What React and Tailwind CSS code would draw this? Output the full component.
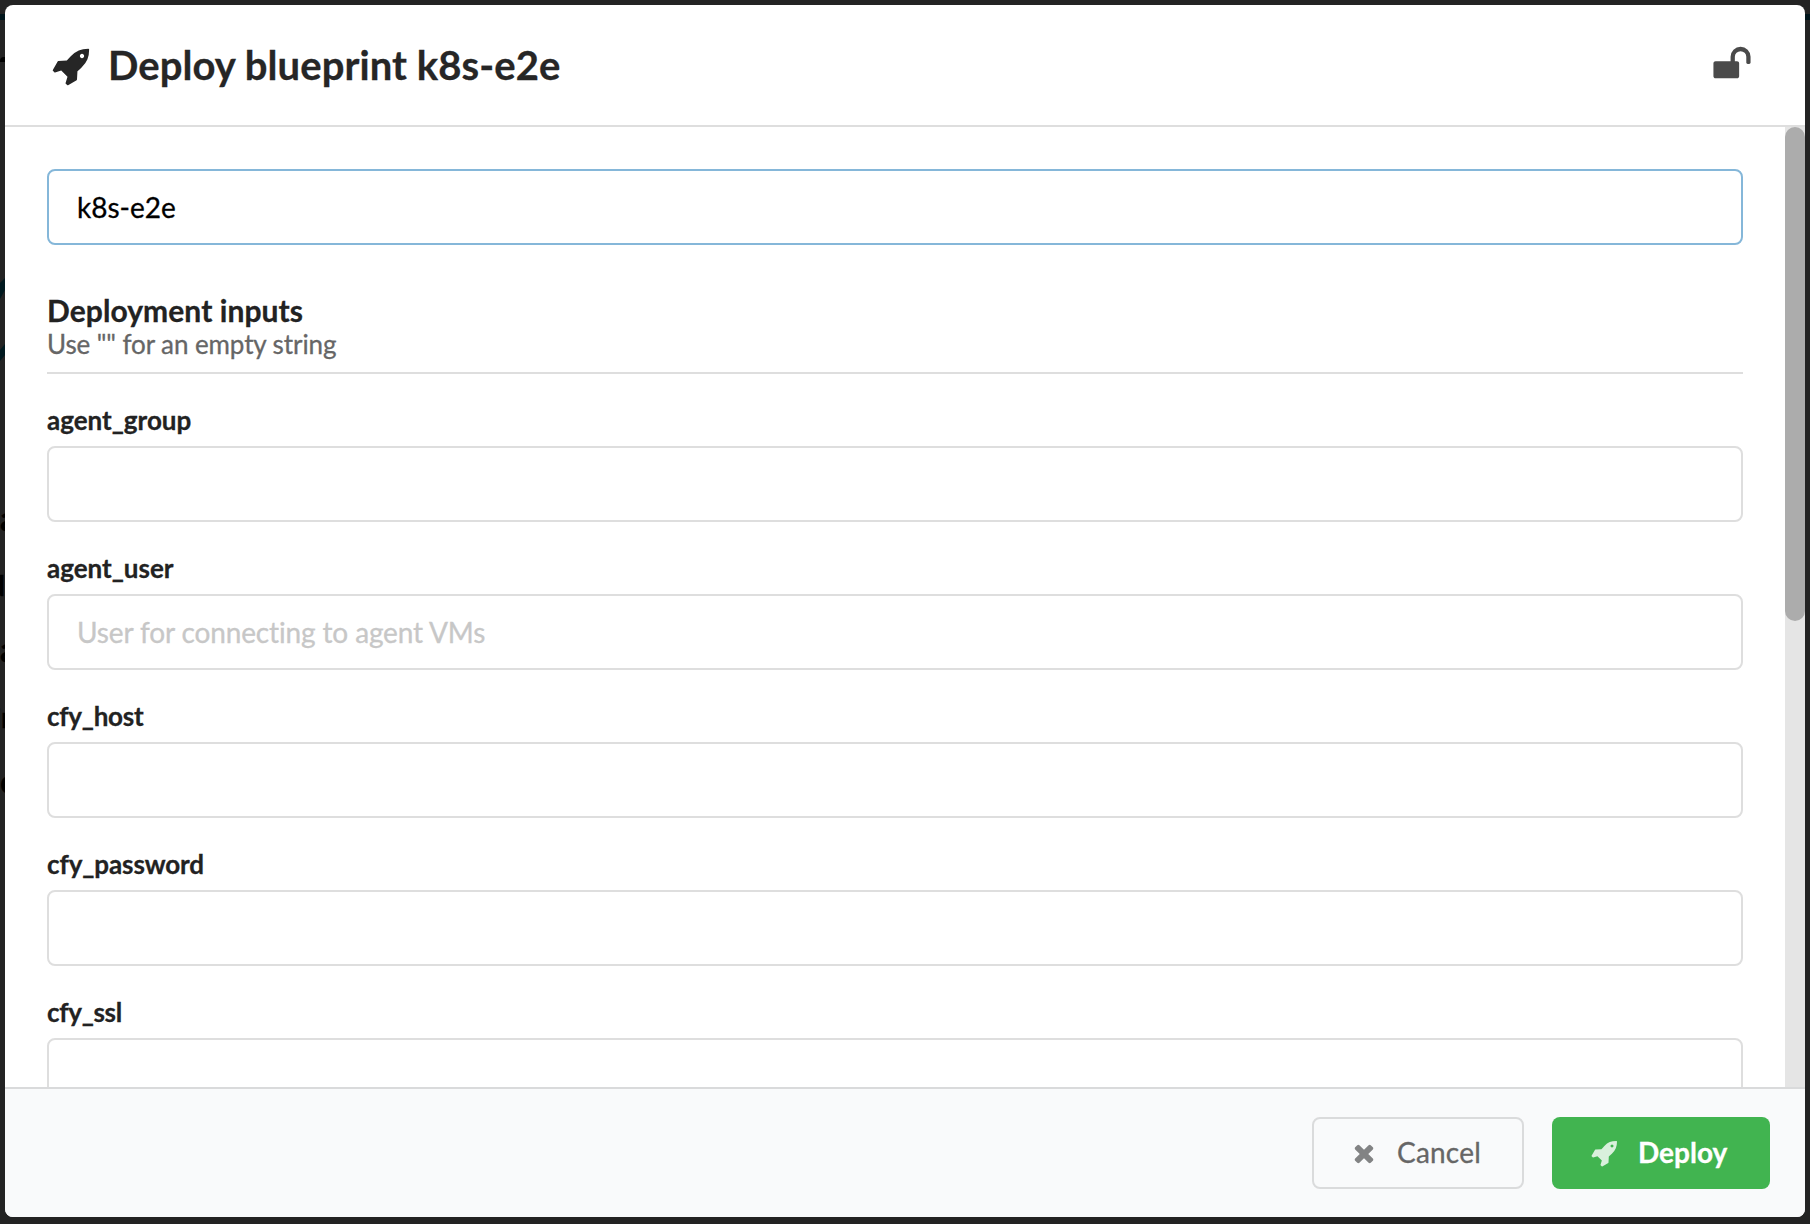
const ROCKET =
  "M1440 448q0-40-28-68t-68-28-68 28-28 68 28 68 68 28 68-28 28-68zm224-288q0 249-75.5 430.5t-253.5 360.5q-81 80-195 176l-20 379q-2 16-16 26l-384 224q-7 4-16 4-12 0-23-9l-64-64q-13-14-8-32l85-276-281-281-276 85q-3 1-9 1-14 0-23-9l-64-64q-17-19-5-39l224-384q10-14 26-16l379-20q96-114 176-195 188-187 358-258t431-71q14 0 24 9.5t10 22.5z";
const UNLOCK =
  "M1728 576v256q0 26-19 45t-45 19h-64q-26 0-45-19t-19-45v-256q0-106-75-181t-181-75-181 75-75 181v192h96q40 0 68 28t28 68v576q0 40-28 68t-68 28h-960q-40 0-68-28t-28-68v-576q0-40 28-68t68-28h672v-192q0-185 131.5-316.5t316.5-131.5 316.5 131.5 131.5 316.5z";
const TIMES =
  "M1490 1322q0 40-28 68l-136 136q-28 28-68 28t-68-28l-294-294-294 294q-28 28-68 28t-68-28l-136-136q-28-28-28-68t28-68l294-294-294-294q-28-28-28-68t28-68l136-136q28-28 68-28t68 28l294 294 294-294q28-28 68-28t68 28l136 136q28 28 28 68t-28 68l-294 294 294 294q28 28 28 68z";

function Icon({ path, className }) {
  return (
    <svg viewBox="0 0 1792 1792" fill="currentColor" className={className} aria-hidden="true">
      <path d={path} />
    </svg>
  );
}

const fields = [
  { name: "agent_group", tracking: "" },
  { name: "agent_user", tracking: "", placeholder: "User for connecting to agent VMs" },
  { name: "cfy_host", tracking: "tracking-[-0.25px]" },
  { name: "cfy_password", tracking: "tracking-[-0.1px]" },
  { name: "cfy_ssl", tracking: "tracking-[-0.3px]" },
];

const inputBase =
  "block h-[76px] w-full rounded-lg border-2 bg-white px-7 text-[28px] leading-[34px] outline-none placeholder:tracking-[-0.13px] placeholder:text-[#c7c7c7]";

/* The dimmed page that shows in the narrow margin around the modal. */
function DimmedPage() {
  return (
    <div className="absolute inset-0 overflow-hidden text-[34px] leading-none font-bold text-black" aria-hidden="true">
      <div className="absolute top-[14px] left-0 h-[6px] w-full bg-[#00151b]" />
      <div className="absolute top-[57px] left-0 h-[5px] w-[5px] rounded-tl bg-black" />
      <svg className="absolute top-[276px] left-0 h-[88px] w-[5px] fill-[#00191f]" viewBox="0 0 5 88">
        <path d="M5 2 0 7V23L5 14z" />
        <path d="M0 74 5 68V79L0 85z" />
      </svg>
      <span className="absolute top-[501px] left-0">a</span>
      <span className="absolute top-[571px] left-[-11px] text-[28px]">d</span>
      <span className="absolute top-[632px] left-0">a</span>
      <span className="absolute top-[703px] left-[-6px] text-[28px]">in</span>
      <span className="absolute top-[764px] left-0">e</span>
    </div>
  );
}

export default function App() {
  return (
    <div className="relative h-[1224px] w-[1810px] overflow-hidden bg-[#232323] px-[5px] pt-[5px] font-['Lato',sans-serif] text-[#222] [-webkit-text-stroke:0.3px]">
      <DimmedPage />
      <div className="relative flex h-[1212px] w-[1800px] flex-col overflow-hidden rounded-lg bg-white">
        <header className="flex h-[122px] shrink-0 items-start border-b-2 border-[#dedede] pr-[53px] pl-[47px]">
          <Icon path={ROCKET} className="mt-[41px] size-10 text-[#262626]" />
          <h1 className="mt-[35px] ml-4 text-[40px] leading-[51px] font-bold tracking-[0.08px] text-[#262626]">Deploy blueprint k8s-e2e</h1>
          <Icon path={UNLOCK} className="mt-[39px] ml-auto size-10 text-[#4a4a4a]" />
        </header>

        <div className="flex min-h-0 flex-1">
          <main className="flex-1 overflow-hidden pt-[42px] pr-[42px] pl-[42px]">
            <input className={inputBase + " border-[#85b7d9] text-black"} defaultValue="k8s-e2e" />
            <div className="mt-[47px] h-[82px] border-b-2 border-[#dedede]">
              <h2 className="text-[30px] leading-9 font-bold tracking-[0.07px]">Deployment inputs</h2>
              <p className="mt-px text-[26px] leading-[31px] tracking-[-0.09px] text-[#666]">Use "" for an empty string</p>
            </div>
            <div className="pt-7">
              {fields.map((f) => (
                <label key={f.name} className="mb-7 block">
                  <span className={"mb-2 block text-[26px] leading-9 font-bold " + f.tracking}>{f.name}</span>
                  <input className={inputBase + " border-[#dedede]"} placeholder={f.placeholder} />
                </label>
              ))}
            </div>
          </main>
          <div className="w-5 bg-[#e5e5e5]">
            <div className="h-[494px] rounded-full bg-[#acacac]" />
          </div>
        </div>

        <footer className="flex h-[130px] shrink-0 justify-end gap-7 border-t-2 border-[#d9dadb] bg-[#f9fafb] pt-7 pr-[35px]">
          <button className="flex h-[72px] w-[212px] items-center rounded-lg border-2 border-[#dadbdc] pl-9 text-[28px] leading-7 text-[#666]">
            <Icon path={TIMES} className="size-7 text-[#828384]" />
            <span className="mb-0.5 ml-[19px] tracking-[0.2px]">Cancel</span>
          </button>
          <button className="flex h-[72px] w-[218px] items-center rounded-lg bg-[#41b450] pl-[39px] text-[28px] leading-7 font-bold text-white">
            <Icon path={ROCKET} className="size-7 text-[#d9f0dc]" />
            <span className="mb-0.5 ml-[19px]">Deploy</span>
          </button>
        </footer>
      </div>
    </div>
  );
}
